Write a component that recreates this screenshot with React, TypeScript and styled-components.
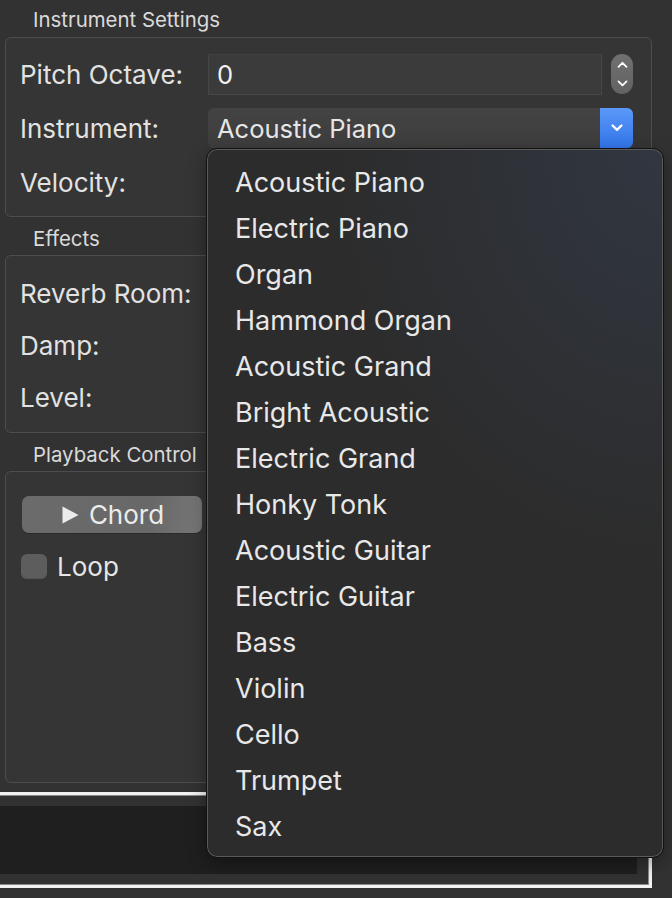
import React from "react";
import styled, { createGlobalStyle } from "styled-components";

const Global = createGlobalStyle`
  html, body { margin: 0; padding: 0; background: #323232; }
  body { font-family: Inter, "Noto Sans", "Liberation Sans", sans-serif; color: #e2e2e2; -webkit-font-smoothing: antialiased; }
  * { box-sizing: border-box; }
`;

const Page = styled.div`
  position: relative;
  width: 672px;
  height: 898px;
  overflow: hidden;
  padding: 0 20px 0 5px;
  display: flex;
  flex-direction: column;
`;

const SectionTitle = styled.div<{ $first?: boolean }>`
  height: ${(p) => (p.$first ? 37 : 38)}px;
  padding-left: 28px;
  padding-top: ${(p) => (p.$first ? 8 : 10)}px;
  font-size: 20.4px;
  line-height: 24px;
  color: #dadada;
`;

const Group = styled.div<{ $h: number; $pt: number; $gap: number }>`
  height: ${(p) => p.$h}px;
  border: 1px solid #4d4d4d;
  border-radius: 6px;
  background: #353535;
  padding: ${(p) => p.$pt}px 18px 0 14px;
  display: flex;
  flex-direction: column;
  gap: ${(p) => p.$gap}px;
`;

const Row = styled.div`
  height: 40px;
  display: flex;
  align-items: center;
`;

const Label = styled.div`
  width: 188px;
  flex: none;
  font-size: 26px;
  color: #e2e2e2;
`;

const SpinField = styled.div`
  flex: 1;
  height: 41px;
  background: #3b3b3b;
  border: 1px solid #464646;
  border-top-color: #414141;
  display: flex;
  align-items: center;
  padding-left: 8px;
  font-size: 25.5px;
  color: #f2f2f2;
`;

const Stepper = styled.div`
  width: 22px;
  height: 40px;
  margin-left: 9px;
  border-radius: 11px;
  background: linear-gradient(#707070, #626262);
  display: flex;
  flex-direction: column;
  align-items: center;
  justify-content: center;
  gap: 11px;
`;

const Combo = styled.div`
  flex: 1;
  height: 40px;
  display: flex;
  border-radius: 6px;
  overflow: hidden;
  background: linear-gradient(#434343, #3d3d3d);
`;

const ComboText = styled.div`
  flex: 1;
  display: flex;
  align-items: center;
  padding-left: 9px;
  font-size: 25.5px;
  color: #e6e6e6;
`;

const ComboArrow = styled.div`
  width: 33px;
  background: linear-gradient(#5b98f8, #3275ea);
  display: flex;
  align-items: center;
  justify-content: center;
`;

const PlayButton = styled.button`
  width: 180px;
  height: 37px;
  margin: 24px 0 0 2px;
  border: none;
  border-radius: 7px;
  background: linear-gradient(100deg, #6b6b6b 0%, #686868 70%, #777 100%);
  box-shadow: 0 1px 0 #2a2a2a;
  display: flex;
  align-items: center;
  justify-content: center;
  gap: 10px;
  font-family: inherit;
  font-size: 26px;
  color: #ececec;
  padding: 0 0 0 2px;
`;

const CheckRow = styled.label`
  display: flex;
  align-items: center;
  gap: 10px;
  margin: 18px 0 0 1px;
  font-size: 26px;
  color: #e6e6e6;
`;

const CheckBox = styled.span`
  width: 26px;
  height: 25px;
  border-radius: 6px;
  background: #5d5d5d;
  box-shadow: inset 0 -1px 0 #545454;
`;

const OutputFrame = styled.div`
  margin: 9px 0 0 -10px;
  height: 96px;
  border: 3px solid #f2f2f2;
  border-left: none;
  box-shadow: inset 0 1px 0 #8a8a8a, inset -1px -1px 0 #8a8a8a;
  padding: 11px 12px 10px 0;
`;

const OutputArea = styled.div`
  height: 68px;
  background: #1f1f1f;
`;

const Menu = styled.div`
  position: absolute;
  left: 206px;
  top: 148px;
  width: 458px;
  height: 710px;
  border-radius: 11px;
  border: 1px solid #121212;
  box-shadow: inset 0 0 0 1px #5a5a5a, 0 6px 18px rgba(0, 0, 0, 0.35);
  background:
    radial-gradient(ellipse 420px 520px at 100% 0%, rgba(50, 57, 70, 0.8), rgba(44, 44, 46, 0) 80%),
    #2c2c2c;
  padding: 10px 0 0 0;
`;

const MenuItem = styled.div`
  height: 46px;
  display: flex;
  align-items: center;
  padding-left: 28px;
  font-size: 27px;
  color: #e8e8e8;
`;

const instruments = [
  "Acoustic Piano",
  "Electric Piano",
  "Organ",
  "Hammond Organ",
  "Acoustic Grand",
  "Bright Acoustic",
  "Electric Grand",
  "Honky Tonk",
  "Acoustic Guitar",
  "Electric Guitar",
  "Bass",
  "Violin",
  "Cello",
  "Trumpet",
  "Sax",
];

const Chevron = ({ up, size = 11, w = 2.2 }: { up?: boolean; size?: number; w?: number }) => (
  <svg width={size} height={size * 0.65} viewBox="0 0 12 8">
    <path
      d={up ? "M1.5 6.5 L6 2 L10.5 6.5" : "M1.5 1.5 L6 6 L10.5 1.5"}
      fill="none"
      stroke="#fff"
      strokeWidth={w}
      strokeLinecap="round"
      strokeLinejoin="round"
    />
  </svg>
);

export default function App() {
  return (
    <>
      <Global />
      <Page>
        <SectionTitle $first>Instrument Settings</SectionTitle>
        <Group $h={180} $pt={16} $gap={14}>
          <Row>
            <Label>Pitch Octave:</Label>
            <SpinField>0</SpinField>
            <Stepper>
              <Chevron up size={11} w={2} />
              <Chevron size={11} w={2} />
            </Stepper>
          </Row>
          <Row>
            <Label>Instrument:</Label>
            <Combo>
              <ComboText>Acoustic Piano</ComboText>
              <ComboArrow>
                <Chevron size={12} w={2.4} />
              </ComboArrow>
            </Combo>
          </Row>
          <Row>
            <Label>Velocity:</Label>
          </Row>
        </Group>
        <SectionTitle>Effects</SectionTitle>
        <Group $h={178} $pt={17} $gap={12}>
          <Row>
            <Label>Reverb Room:</Label>
          </Row>
          <Row>
            <Label>Damp:</Label>
          </Row>
          <Row>
            <Label>Level:</Label>
          </Row>
        </Group>
        <SectionTitle>Playback Control</SectionTitle>
        <Group $h={312} $pt={0} $gap={0}>
          <PlayButton>
            <svg width="17" height="18" viewBox="0 0 17 18">
              <path d="M0.5 0.5 L16.5 9 L0.5 17.5 Z" fill="#ececec" />
            </svg>
            <span>Chord</span>
          </PlayButton>
          <CheckRow>
            <CheckBox />
            Loop
          </CheckRow>
        </Group>
        <OutputFrame>
          <OutputArea />
        </OutputFrame>
        <Menu>
          {instruments.map((name) => (
            <MenuItem key={name}>{name}</MenuItem>
          ))}
        </Menu>
      </Page>
    </>
  );
}
